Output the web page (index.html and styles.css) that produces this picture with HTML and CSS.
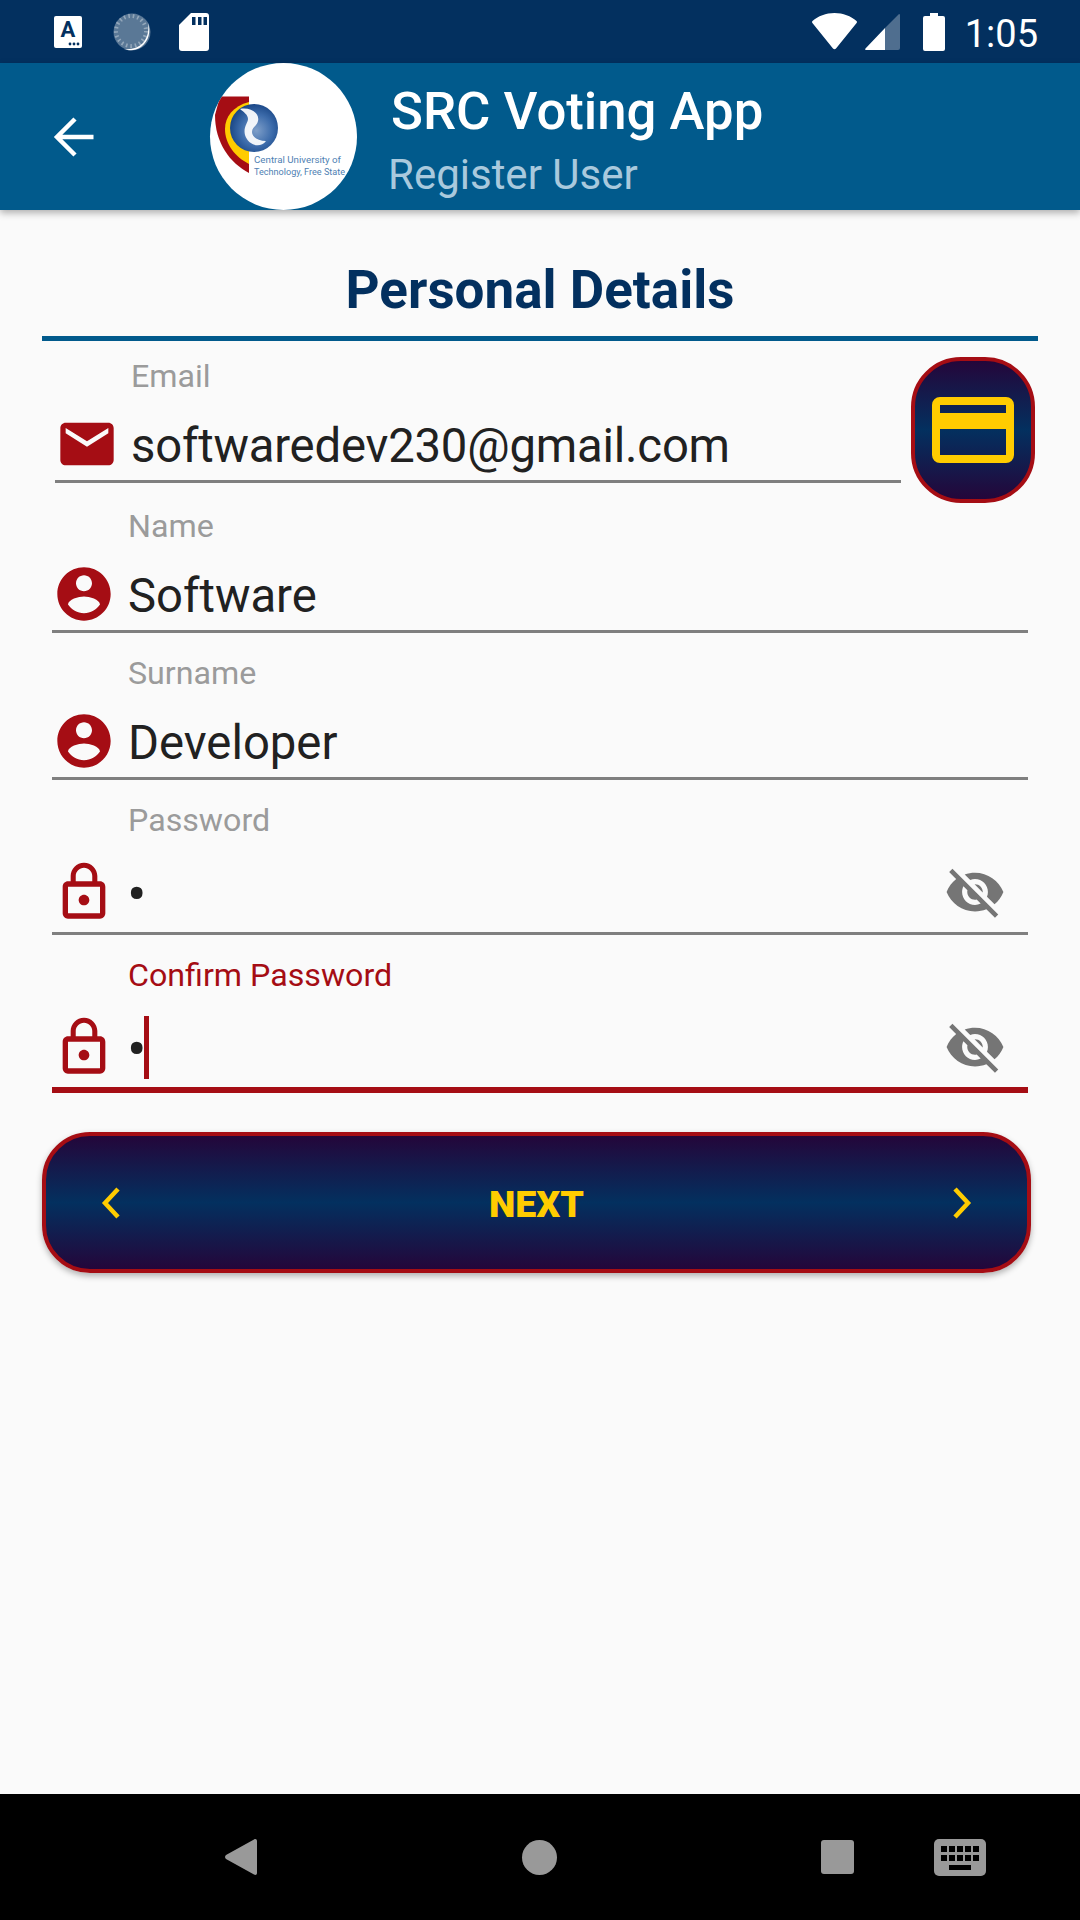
FILE: index.html
```html
<!DOCTYPE html>
<html lang="en">
<head>
<meta charset="utf-8">
<title>SRC Voting App</title>
<link rel="stylesheet" href="styles.css">
</head>
<body>
<div class="screen">
  <div class="statusbar">
    <div class="status-left">
      <svg class="ic-a" viewBox="0 0 28 32"><rect width="28" height="32" rx="2" fill="#fff"/><text x="14" y="21" class="ic-a-letter">A</text><circle cx="16" cy="28" r="1.4" fill="#03305f"/><circle cx="20" cy="28" r="1.4" fill="#03305f"/><circle cx="24" cy="28" r="1.4" fill="#03305f"/></svg>
      <svg class="ic-dial" viewBox="0 0 38 38"><circle cx="19" cy="19" r="18.5" fill="#fff" fill-opacity=".35"/><circle cx="18" cy="18" r="15" fill="none" stroke="#fff" stroke-opacity=".35" stroke-width="4" stroke-dasharray="1.6 2.9"/><path d="M35 10c3 8 1 18-7 24-6 4-12 4-17 2 7 1 14-1 19-6 5-6 6-13 5-20z" fill="#fff"/></svg>
      <svg class="ic-sd" viewBox="0 0 30 38"><path d="M12 0h15a3 3 0 0 1 3 3v32a3 3 0 0 1-3 3H3a3 3 0 0 1-3-3V12z" fill="#fff"/><path d="M13 4h3.500v8H13zM19 4h3.500v8H19zM24.500 4H28v8h-3.500z" fill="#03305f"/></svg>
    </div>
    <div class="status-right">
      <svg class="ic-wifi" viewBox="0 0 45 37"><path d="M22.500 0C14 0 6 3 .5 8c-.6.500-.6 1.300-.1 1.900L21 35.500c.8 1 2.200 1 3 0L44.600 9.900c.5-.6.500-1.400-.1-1.900C39 3 31 0 22.500 0z" fill="#fff"/></svg>
      <svg class="ic-signal" viewBox="0 0 35 36"><path d="M34 0a1 1 0 0 1 1 1v33a2 2 0 0 1-2 2H20V14z" fill="#fff" fill-opacity=".3"/><path d="M20 14v22H1c-1 0-1.200-.8-.5-1.500z" fill="#fff"/></svg>
      <svg class="ic-battery" viewBox="0 0 22 38"><path d="M7 0h8v3h5a2 2 0 0 1 2 2v31a2 2 0 0 1-2 2H2a2 2 0 0 1-2-2V5a2 2 0 0 1 2-2h5z" fill="#fff"/></svg>
      <span class="clock">1:05</span>
    </div>
  </div>

  <header class="appbar">
    <svg class="back" viewBox="0 0 42 42"><path d="M40.500 21H5M22 3 4 21l18 18" fill="none" stroke="#fff" stroke-width="4.500"/></svg>
    <div class="logo">
      <svg viewBox="0 0 147 147">
        <defs><radialGradient id="ball" cx="55%" cy="55%" r="60%"><stop offset="0" stop-color="#7f9fc9"/><stop offset=".55" stop-color="#3d6cab"/><stop offset="1" stop-color="#134080"/></radialGradient></defs>
        <path d="M10 33.500h29V110C20 100 5 80 5 52z" fill="#a50d14"/>
        <path d="M39 39C23 43 15 54 15 66c0 15 10 28 24 35z" fill="#ffcc00"/>
        <circle cx="44" cy="65" r="24" fill="url(#ball)"/>
        <path d="M30 46c10-2 20 4 18 12-1 5-6 6-6 11s6 9 14 9c-6 8-18 4-21-6-2-8 3-12 3-16s-4-7-8-10z" fill="#fff" fill-opacity=".92"/>
        <text x="44" y="100" class="logo-text" textLength="87" lengthAdjust="spacingAndGlyphs">Central University of</text>
        <text x="44" y="112" class="logo-text" textLength="91" lengthAdjust="spacingAndGlyphs">Technology, Free State</text>
      </svg>
    </div>
    <div class="titles">
      <div class="title">SRC Voting App</div>
      <div class="subtitle">Register User</div>
    </div>
  </header>

  <main class="content">
    <h1 class="heading">Personal Details</h1>
    <div class="email-row">
      <div class="field field-email">
        <div class="label">Email</div>
        <div class="input">
          <svg class="field-icon" viewBox="0 0 24 24"><path d="M20 4H4c-1.100 0-1.990.9-1.990 2L2 18c0 1.100.9 2 2 2h16c1.100 0 2-.9 2-2V6c0-1.100-.9-2-2-2zm0 4l-8 5-8-5V6l8 5 8-5v2z"/></svg>
          <span class="value value-email">softwaredev230@gmail.com</span>
        </div>
      </div>
      <button class="card-btn" type="button">
        <svg viewBox="0 0 82 66"><path d="M8 0h66a8 8 0 0 1 8 8v50a8 8 0 0 1-8 8H8a8 8 0 0 1-8-8V8a8 8 0 0 1 8-8zM8 8v8h66V8zM8 32v26h66V32z" fill="#ffcc00" fill-rule="evenodd"/></svg>
      </button>
    </div>
    <div class="field field-name">
      <div class="label">Name</div>
      <div class="input">
        <svg class="field-icon" viewBox="0 0 24 24"><path d="M12 2C6.480 2 2 6.480 2 12s4.480 10 10 10 10-4.480 10-10S17.520 2 12 2zm0 3c1.660 0 3 1.340 3 3s-1.340 3-3 3-3-1.340-3-3 1.340-3 3-3zm0 14.200c-2.500 0-4.710-1.280-6-3.220.03-1.990 4-3.080 6-3.080 1.990 0 5.970 1.090 6 3.080-1.290 1.940-3.500 3.220-6 3.220z"/></svg>
        <span class="value">Software</span>
      </div>
    </div>
    <div class="field field-surname">
      <div class="label">Surname</div>
      <div class="input">
        <svg class="field-icon" viewBox="0 0 24 24"><path d="M12 2C6.480 2 2 6.480 2 12s4.480 10 10 10 10-4.480 10-10S17.520 2 12 2zm0 3c1.660 0 3 1.340 3 3s-1.340 3-3 3-3-1.340-3-3 1.340-3 3-3zm0 14.200c-2.500 0-4.710-1.280-6-3.220.03-1.990 4-3.080 6-3.080 1.990 0 5.970 1.090 6 3.080-1.290 1.940-3.500 3.220-6 3.220z"/></svg>
        <span class="value">Developer</span>
      </div>
    </div>
    <div class="field field-pass">
      <div class="label">Password</div>
      <div class="input">
        <svg class="field-icon" viewBox="0 0 24 24"><path d="M12 17c1.100 0 2-.9 2-2s-.9-2-2-2-2 .9-2 2 .9 2 2 2zm6-9h-1V6c0-2.760-2.240-5-5-5S7 3.240 7 6v2H6c-1.100 0-2 .9-2 2v10c0 1.100.9 2 2 2h12c1.100 0 2-.9 2-2V10c0-1.100-.9-2-2-2zM8.900 6c0-1.710 1.390-3.100 3.100-3.100s3.100 1.390 3.100 3.100v2H8.900V6zM18 20H6V10h12v10z"/></svg>
        <span class="value"><span class="dot">•</span></span>
        <svg class="eye" viewBox="0 0 24 24"><path d="M12 7c2.760 0 5 2.240 5 5 0 .65-.13 1.260-.36 1.830l2.920 2.920c1.510-1.260 2.700-2.890 3.430-4.750-1.730-4.390-6-7.500-11-7.500-1.400 0-2.740.25-3.980.7l2.160 2.160C10.740 7.130 11.350 7 12 7zM2 4.270l2.280 2.280.46.46C3.080 8.300 1.780 10.020 1 12c1.730 4.390 6 7.500 11 7.500 1.550 0 3.030-.3 4.380-.84l.42.42L19.730 22 21 20.730 3.270 3 2 4.270zM7.530 9.800l1.550 1.550c-.05.21-.08.43-.08.65 0 1.660 1.340 3 3 3 .22 0 .44-.03.65-.08l1.550 1.550c-.67.33-1.410.53-2.200.53-2.760 0-5-2.240-5-5 0-.79.2-1.530.53-2.200zm4.310-.78l3.150 3.150.02-.16c0-1.660-1.340-3-3-3l-.17.01z"/></svg>
      </div>
    </div>
    <div class="field field-confirm">
      <div class="label">Confirm Password</div>
      <div class="input">
        <svg class="field-icon" viewBox="0 0 24 24"><path d="M12 17c1.100 0 2-.9 2-2s-.9-2-2-2-2 .9-2 2 .9 2 2 2zm6-9h-1V6c0-2.760-2.240-5-5-5S7 3.240 7 6v2H6c-1.100 0-2 .9-2 2v10c0 1.100.9 2 2 2h12c1.100 0 2-.9 2-2V10c0-1.100-.9-2-2-2zM8.900 6c0-1.710 1.390-3.100 3.100-3.100s3.100 1.390 3.100 3.100v2H8.900V6zM18 20H6V10h12v10z"/></svg>
        <span class="value"><span class="dot">•</span><span class="caret"></span></span>
        <svg class="eye" viewBox="0 0 24 24"><path d="M12 7c2.760 0 5 2.240 5 5 0 .65-.13 1.260-.36 1.830l2.920 2.920c1.510-1.260 2.700-2.890 3.430-4.750-1.730-4.390-6-7.500-11-7.500-1.400 0-2.740.25-3.980.7l2.160 2.160C10.740 7.130 11.350 7 12 7zM2 4.270l2.280 2.280.46.46C3.080 8.300 1.780 10.020 1 12c1.730 4.390 6 7.500 11 7.500 1.550 0 3.030-.3 4.380-.84l.42.42L19.730 22 21 20.730 3.270 3 2 4.270zM7.530 9.800l1.550 1.550c-.05.21-.08.43-.08.65 0 1.660 1.340 3 3 3 .22 0 .44-.03.65-.08l1.550 1.550c-.67.33-1.410.53-2.200.53-2.760 0-5-2.240-5-5 0-.79.2-1.530.53-2.200zm4.310-.78l3.150 3.150.02-.16c0-1.660-1.340-3-3-3l-.17.01z"/></svg>
      </div>
    </div>
    <button class="next-btn" type="button">
      <svg class="chev" viewBox="0 0 20 32"><path d="M17 2 4 16l13 14" fill="none" stroke="#ffcc00" stroke-width="4.500"/></svg>
      <span class="next-label">NEXT</span>
      <svg class="chev" viewBox="0 0 20 32"><path d="m3 2 13 14L3 30" fill="none" stroke="#ffcc00" stroke-width="4.500"/></svg>
    </button>
  </main>

  <nav class="navbar">
    <svg class="nav-back" viewBox="0 0 32 36"><path d="M29 .5c1.500-1 3-.3 3 1.500v32c0 1.800-1.500 2.500-3 1.500L1 20c-1.300-1-1.300-3 0-4z" fill="#999"/></svg>
    <span class="nav-home"></span>
    <span class="nav-square"></span>
    <svg class="nav-keys" viewBox="0 0 52 37"><rect width="52" height="37" rx="5" fill="#999"/><path d="M7 7h6v6H7zM15 7h6v6h-6zM23 7h6v6h-6zM31 7h6v6h-6zM39 7h6v6h-6zM7 16h6v6H7zM15 16h6v6h-6zM23 16h6v6h-6zM31 16h6v6h-6zM39 16h6v6h-6zM15 26h22v5H15z" fill="#000"/></svg>
  </nav>
</div>
</body>
</html>
```

FILE: styles.css
```css
* { box-sizing: border-box; }
html, body { margin: 0; padding: 0; }
body { width: 1080px; height: 1920px; font-family: Roboto, "Liberation Sans", sans-serif; background: #fafafa; overflow: hidden; }
svg { display: block; flex: none; }

.screen { width: 1080px; height: 1920px; display: flex; flex-direction: column; }

/* status bar */
.statusbar { height: 63px; flex: none; background: #03305f; display: flex; justify-content: space-between; align-items: center; padding: 0 42px 0 54px; }
.status-left, .status-right { display: flex; align-items: center; }
.ic-a { width: 28px; height: 32px; }
.ic-a-letter { font: 700 22px Roboto, sans-serif; fill: #03305f; text-anchor: middle; }
.ic-dial { width: 38px; height: 38px; margin-left: 31px; }
.ic-sd { width: 30px; height: 38px; margin-left: 28px; }
.ic-wifi { width: 45px; height: 37px; }
.ic-signal { width: 35px; height: 36px; margin-left: 8px; }
.ic-battery { width: 22px; height: 38px; margin-left: 23px; }
.clock { color: #fff; font-size: 38px; line-height: 38px; margin: 4px 0 0 20px; font-weight: 400; }

/* app bar */
.appbar { height: 147px; flex: none; background: #015a8c; display: flex; align-items: center; padding-left: 53px; box-shadow: 0 3px 7px rgba(0,0,0,.3); position: relative; z-index: 2; }
.back { width: 42px; height: 42px; }
.logo { width: 147px; height: 147px; border-radius: 50%; background: #fff; overflow: hidden; margin-left: 115px; flex: none; }
.logo svg { width: 147px; height: 147px; }
.logo-text { font: 400 9.7px Roboto, sans-serif; fill: #4f7fb3; }
.titles { margin-left: 34px; padding-top: 8px; display: flex; flex-direction: column; }
.title { color: #fff; font-size: 52.7px; font-weight: 500; line-height: 56px; }
.subtitle { color: #a9c9dd; font-size: 42px; line-height: 48px; margin-top: 12px; margin-left: -3px; }

/* content */
.content { flex: 1; padding: 0 42px; display: flex; flex-direction: column; }
.heading { margin: 0; height: 131px; padding-top: 49px; text-align: center; color: #03305f; font-size: 53px; font-weight: 700; line-height: 62px; border-bottom: 5px solid #015a8c; }

.email-row { display: flex; align-items: flex-start; height: 142px; }
.field { display: flex; flex-direction: column; border-bottom: 3px solid #7f7f7f; }
.field-email { width: 846px; height: 142px; margin-left: 13px; padding-top: 17px; }
.field-name { height: 150px; width: 976px; margin-left: 10px; padding-top: 25px; }
.field-surname { height: 147px; width: 976px; margin-left: 10px; padding-top: 22px; }
.field-pass { height: 155px; width: 976px; margin-left: 10px; padding-top: 22px; }
.field-confirm { height: 158px; width: 976px; margin-left: 10px; padding-top: 22px; border-bottom: 6px solid #a50d14; }
.field-confirm .label { color: #a50d14; }

.label { color: #9b9b9b; font-size: 32.2px; line-height: 36px; padding-left: 76px; }
.input { display: flex; align-items: center; margin-top: 20px; height: 64px; position: relative; }
.field-pass .input, .field-confirm .input { margin-top: 22px; }
.field-icon { width: 64px; height: 64px; fill: #a50d14; margin-right: 12px; }
.field-email .field-icon, .field-name .field-icon, .field-surname .field-icon { margin-bottom: 5px; }
.value { color: #212121; font-size: 47.25px; line-height: 64px; display: inline-flex; align-items: center; }
.value-email { letter-spacing: -.2px; }
.dot { font-size: 58px; line-height: 64px; padding-top: 3px; margin-left: -1px; }
.caret { width: 5px; height: 63px; background: #a50d14; margin-left: -3px; }
.eye { width: 62px; height: 62px; fill: #757575; margin-left: auto; margin-right: 22px; }

.card-btn { width: 124px; height: 146px; margin: 16px 0 0 10px; padding: 0; border: 4px solid #a50d14; border-radius: 50px; background: linear-gradient(#24063a, #03305f 50%, #24063a); display: flex; align-items: center; justify-content: center; flex: none; }
.card-btn svg { width: 82px; height: 66px; }

.next-btn { width: 989px; height: 141px; margin: 39px 0 0 0; padding: 0 55px; border: 4px solid #a50d14; border-radius: 48px; background: linear-gradient(#24063a, #03305f 50%, #24063a); box-shadow: 0 3px 6px rgba(0,0,0,.3); display: flex; align-items: center; justify-content: space-between; }
.next-label { color: #ffcc00; font: 900 37.5px Roboto, sans-serif; padding-top: 2px; }
.chev { width: 20px; height: 32px; }

/* navigation bar */
.navbar { height: 126px; flex: none; background: #000; position: relative; display: flex; align-items: center; padding: 0 0 0 225px; }
.nav-back { width: 32px; height: 36px; }
.nav-home { width: 35px; height: 35px; border-radius: 50%; background: #999; margin-left: 265px; }
.nav-square { width: 33px; height: 34px; border-radius: 3px; background: #999; margin-left: 264px; }
.nav-keys { width: 52px; height: 37px; margin-left: 80px; }
```
